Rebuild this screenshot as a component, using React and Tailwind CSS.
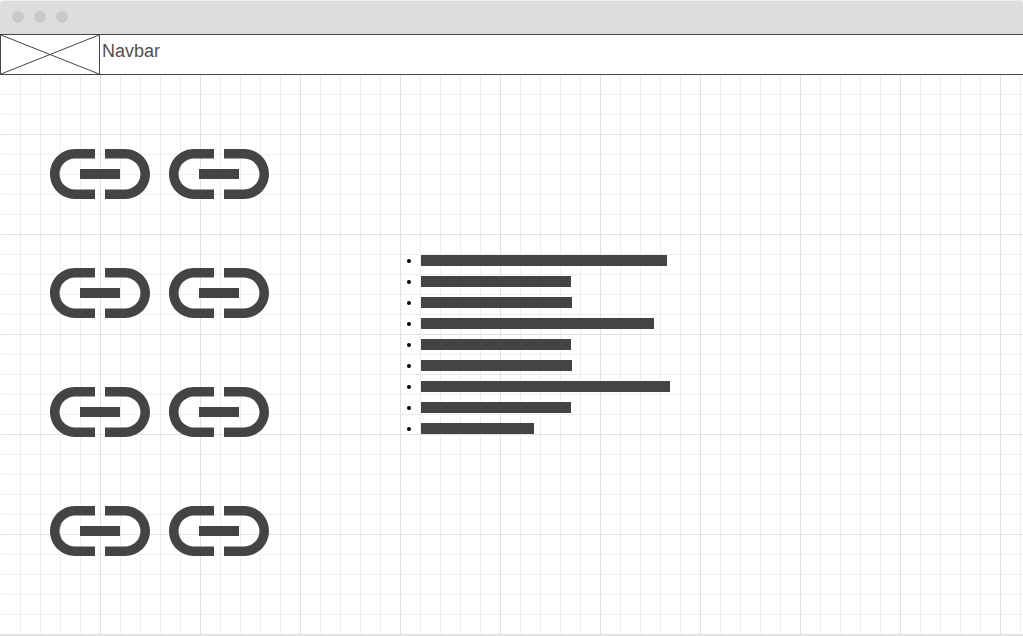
import React from "react";

const ROWS = [
  "w-[246px]",
  "w-[150px]",
  "w-[151px]",
  "w-[233px]",
  "w-[150px]",
  "w-[151px]",
  "w-[249px]",
  "w-[150px]",
  "w-[113px]",
];

function WindowBar() {
  return (
    <div className="bg-[#f0f0f0] pt-px">
      <div className="flex h-[33px] items-start gap-2.5 rounded-t bg-[#dddddd] px-3 pt-2.5">
        <span className="size-3 rounded-full bg-[#c9c9c9]" />
        <span className="size-3 rounded-full bg-[#c9c9c9]" />
        <span className="size-3 rounded-full bg-[#c9c9c9]" />
      </div>
    </div>
  );
}

function Navbar() {
  return (
    <header className="flex h-[41px] border-y border-[#444444] bg-white">
      <div className="w-[100px] border-x border-[#444444]">
        <svg
          className="block size-full"
          viewBox="0 0 98 39"
          preserveAspectRatio="none"
          stroke="#444444"
          strokeWidth="1"
          aria-hidden="true"
        >
          <path d="M0 0L98 39M98 0L0 39" />
        </svg>
      </div>
      <span className="pt-1 pl-0.5 text-lg leading-6 text-[#505050]">Navbar</span>
    </header>
  );
}

function LinkIcon() {
  return (
    <svg className="block h-[50px] w-[100px]" viewBox="2 7 20 10" fill="#444444" aria-hidden="true">
      <path d="M3.9 12c0-1.71 1.39-3.1 3.1-3.1h4V7H7c-2.76 0-5 2.24-5 5s2.24 5 5 5h4v-1.9H7c-1.71 0-3.1-1.39-3.1-3.1zM8 13h8v-2H8v2zm9-6h-4v1.9h4c1.71 0 3.1 1.39 3.1 3.1s-1.39 3.1-3.1 3.1h-4V17h4c2.76 0 5-2.24 5-5s-2.24-5-5-5z" />
    </svg>
  );
}

export default function App() {
  return (
    <div className="flex min-h-screen flex-col border-b border-[#e6e6e6] bg-white font-['Liberation_Sans',Arial,sans-serif]">
      <WindowBar />
      <div className="grow bg-[linear-gradient(to_right,#e0e0e0_1px,transparent_1px),linear-gradient(to_bottom,#e0e0e0_1px,transparent_1px),linear-gradient(to_right,#eeeeee_1px,transparent_1px),linear-gradient(to_bottom,#eeeeee_1px,transparent_1px)] bg-[size:100px_100px,100px_100px,20px_20px,20px_20px]">
        <Navbar />
        <main className="flex items-start border-l border-white pt-[74px] pb-[78px] pl-[49px]">
          <div className="grid grid-cols-2 gap-x-[19px] gap-y-[69px]">
            {Array.from({ length: 8 }, (_, i) => (
              <LinkIcon key={i} />
            ))}
          </div>
          <ul className="mt-[106px] ml-[138px] flex flex-col gap-2.5">
            {ROWS.map((width, i) => (
              <li key={i} className="flex gap-2.5">
                <span className="mt-1 size-1 rounded-full bg-black" />
                <span className={`h-[11px] bg-[#444444] ${width}`} />
              </li>
            ))}
          </ul>
        </main>
      </div>
    </div>
  );
}
